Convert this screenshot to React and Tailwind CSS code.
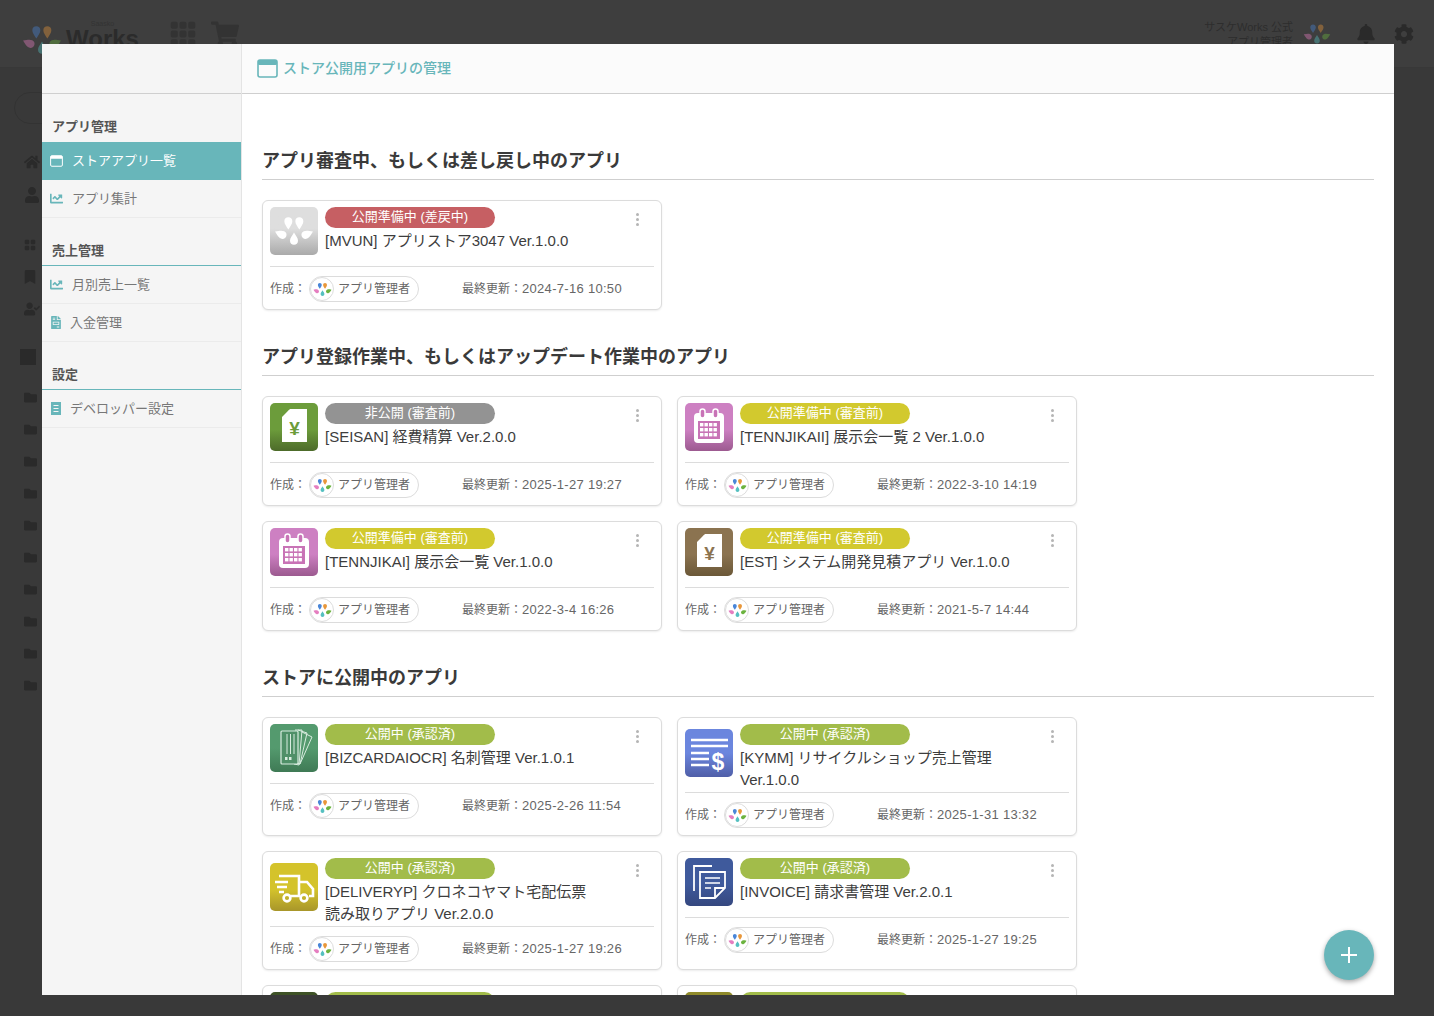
import React from "react";
import { FaHome, FaUserCheck, FaBookmark, FaFolder, FaBell, FaCog, FaChartLine, FaFileInvoice, FaShoppingCart, FaUser } from "react-icons/fa";
import { BsFillGrid3X3GapFill, BsGridFill } from "react-icons/bs";

const font = { fontFamily: '"Liberation Sans", "Noto Sans CJK JP", sans-serif' };

const Drop = ({ x, y, r, s = 1, fill }) => (
  <path
    transform={`translate(${x} ${y}) rotate(${r}) scale(${s})`}
    d="M0 -5.2C1.6 -2.6 3 -1 3 1C3 2.8 1.7 4 0 4C-1.7 4 -3 2.8 -3 1C-3 -1 -1.6 -2.6 0 -5.2Z"
    fill={fill}
  />
);

const Logo = ({ className, colors = ["#4a86d8", "#e8973a", "#e57ec0", "#6cb33f", "#55c0c0"] }) => (
  <svg viewBox="0 0 24 24" className={className}>
    <Drop x={8.6} y={7} r={180} s={0.8} fill={colors[0]} />
    <Drop x={15.2} y={7} r={180} s={0.8} fill={colors[1]} />
    <Drop x={4.4} y={14} r={-65} s={0.8} fill={colors[2]} />
    <Drop x={19.6} y={14} r={65} s={0.8} fill={colors[3]} />
    <Drop x={12} y={17} r={0} s={0.8} fill={colors[4]} />
  </svg>
);

const WindowIcon = ({ className }) => (
  <svg viewBox="0 0 21 19" className={className}>
    <rect x="1" y="1" width="19" height="17" rx="2" fill="none" stroke="currentColor" strokeWidth="1.6" />
    <rect x="1" y="1" width="19" height="5" rx="1.5" fill="currentColor" />
  </svg>
);

const ReceiptIcon = ({ className }) => (
  <svg viewBox="0 0 10 13" className={className}>
    <path d="M0 0h10v13H0z" fill="currentColor" />
    <path d="M2.5 3.5h5M2.5 6.5h5M2.5 9.5h5" stroke="#f5f5f5" strokeWidth="1" />
  </svg>
);

const YenIcon = ({ color }) => (
  <svg viewBox="0 0 48 48" className="w-12 h-12">
    <path d="M20 6h17v33H12V14z" fill="#fff" />
    <path d="M19 7v7h-6z" fill="#fff" opacity="0.75" />
    <text x="24.5" y="32" textAnchor="middle" fontSize="19" fontWeight="700" fill={color} fontFamily="Liberation Sans">¥</text>
  </svg>
);

const CalendarIcon = () => (
  <svg viewBox="0 0 48 48" className="w-12 h-12">
    <rect x="9" y="10" width="30" height="30" rx="4" fill="#fff" />
    <rect x="13" y="18" width="22" height="18" fill="#c873b6" />
    <rect x="15" y="6" width="5" height="9" rx="2.5" fill="#c873b6" stroke="#fff" strokeWidth="1.5" />
    <rect x="28" y="6" width="5" height="9" rx="2.5" fill="#c873b6" stroke="#fff" strokeWidth="1.5" />
    {[20, 25, 30].map((y) =>
      [15, 19.5, 24, 28.5].map((x) => <rect key={`${x}-${y}`} x={x} y={y} width="3.4" height="3.4" fill="#fff" />)
    )}
  </svg>
);

const CardsIcon = () => (
  <svg viewBox="0 0 48 48" className="w-12 h-12" fill="none" stroke="#d8ecdf" strokeWidth="1">
    <path d="M32 8l10 5-12 27-4-2" />
    <path d="M28 6l9 3-7 31-5-1" />
    <path d="M25 6h7l-3 35-5-1" />
    <rect x="11" y="7" width="17" height="33" rx="1" fill="#4f9068" strokeWidth="1.2" />
    <path d="M17 10v20M20.5 10v20M24 10v20" />
    <rect x="15" y="33" width="2.5" height="3" fill="#d8ecdf" stroke="none" />
    <rect x="19" y="33" width="2.5" height="3" fill="#d8ecdf" stroke="none" />
  </svg>
);

const ListIcon = () => (
  <svg viewBox="0 0 48 48" className="w-12 h-12">
    <path d="M6 11h37M6 17h37M6 24h18M6 30h18M6 36h18" stroke="#fff" strokeWidth="2.4" />
    <text x="33" y="41" textAnchor="middle" fontSize="23" fontWeight="700" fill="#fff" fontFamily="Liberation Sans">$</text>
  </svg>
);

const TruckIcon = () => (
  <svg viewBox="0 0 48 48" className="w-12 h-12" fill="none" stroke="#fff" strokeWidth="2.6">
    <path d="M9 13h20v20H19M30 19h7l6 7v7h-4M30 33h-1" />
    <path d="M5 19h13M7 24h10M9 29h5" />
    <circle cx="17" cy="35" r="3.4" />
    <circle cx="34" cy="35" r="3.4" />
  </svg>
);

const InvoiceIcon = () => (
  <svg viewBox="0 0 48 48" className="w-12 h-12" fill="none" stroke="#fff" strokeWidth="1.8">
    <path d="M27 8H9v25" />
    <path d="M15 14h25v16l-10 10H15z" />
    <path d="M30 40V30h10" />
    <path d="M20 20h15M20 25h15M20 30h6" strokeWidth="1.4" />
  </svg>
);

const MonoDrops = () => (
  <div className="w-12 h-12 flex items-center justify-center">
    <Logo className="w-10 h-10" colors={["#fff", "#fff", "#fff", "#fff", "#fff"]} />
  </div>
);

const REVIEW = { label: "公開準備中 (審査前)", color: "bg-[#d2c92e]" };
const LIVE = { label: "公開中 (承認済)", color: "bg-[#a2bc4a]" };

const CardItem = ({ app }) => (
  <div className="relative bg-white border border-[#dcdcdc] rounded-md shadow-[0_1px_2px_rgba(0,0,0,0.08)] px-[7px] pt-[6px] pb-[7px]">
    <div className={app.two ? "flex gap-[7px] h-[68px]" : "flex gap-[7px] h-[59px]"}>
      <div className={`w-12 h-12 shrink-0 rounded-[5px] overflow-hidden ${app.bg} ${app.two ? "mt-[5px]" : ""}`}>{app.icon}</div>
      <div className="w-[272px]">
        <div className={`w-[170px] h-[21px] rounded-full text-white text-[13px] leading-[19px] text-center ${app.status.color}`}>{app.status.label}</div>
        <div className="text-[15px] leading-[22px] text-[#3d3d3d] mt-[2px]">{app.name}</div>
      </div>
    </div>
    <div className="border-t border-[#dcdcdc] flex items-center pt-[9px] text-[12px] text-[#666]">
      <span className="w-[39px] shrink-0">作成：</span>
      <div className="flex items-center w-[110px] h-[26px] border border-[#dcdcdc] rounded-full">
        <div className="w-6 h-6 rounded-full border border-[#ddd] bg-white flex items-center justify-center">
          <Logo className="w-[19px] h-[19px]" />
        </div>
        <span className="ml-[4px]">アプリ管理者</span>
      </div>
      <span className="ml-[43px] whitespace-nowrap">最終更新：<span className="text-[13px] tracking-[0.3px]">{app.date}</span></span>
    </div>
    <div className="absolute right-[22px] top-[12px] flex flex-col gap-[2px]">
      <span className="w-[3px] h-[3px] rounded-full bg-[#b5b5b5]" />
      <span className="w-[3px] h-[3px] rounded-full bg-[#b5b5b5]" />
      <span className="w-[3px] h-[3px] rounded-full bg-[#b5b5b5]" />
    </div>
  </div>
);

const sections = [
  {
    title: "アプリ審査中、もしくは差し戻し中のアプリ",
    apps: [
      { name: "[MVUN] アプリストア3047 Ver.1.0.0", date: "2024-7-16 10:50", status: { label: "公開準備中 (差戻中)", color: "bg-[#c65f63]" }, bg: "bg-linear-to-b from-[#dedede] from-45% to-[#aaaaaa]", icon: <MonoDrops /> },
    ],
  },
  {
    title: "アプリ登録作業中、もしくはアップデート作業中のアプリ",
    apps: [
      { name: "[SEISAN] 経費精算 Ver.2.0.0", date: "2025-1-27 19:27", status: { label: "非公開 (審査前)", color: "bg-[#939393]" }, bg: "bg-linear-to-b from-[#6c9c3b] from-55% to-[#4d6b2a]", icon: <YenIcon color="#6c9c3b" /> },
      { name: "[TENNJIKAII] 展示会一覧 2 Ver.1.0.0", date: "2022-3-10 14:19", status: REVIEW, bg: "bg-linear-to-b from-[#cd80c2] from-55% to-[#9c5a90]", icon: <CalendarIcon /> },
      { name: "[TENNJIKAI] 展示会一覧 Ver.1.0.0", date: "2022-3-4 16:26", status: REVIEW, bg: "bg-linear-to-b from-[#cd80c2] from-55% to-[#9c5a90]", icon: <CalendarIcon /> },
      { name: "[EST] システム開発見積アプリ Ver.1.0.0", date: "2021-5-7 14:44", status: REVIEW, bg: "bg-linear-to-b from-[#8b7350] from-55% to-[#6b5838]", icon: <YenIcon color="#8b7350" /> },
    ],
  },
  {
    title: "ストアに公開中のアプリ",
    apps: [
      { name: "[BIZCARDAIOCR] 名刺管理 Ver.1.0.1", date: "2025-2-26 11:54", status: LIVE, bg: "bg-linear-to-b from-[#549a6e] from-50% to-[#3f7a55]", icon: <CardsIcon /> },
      { name: "[KYMM] リサイクルショップ売上管理 Ver.1.0.0", date: "2025-1-31 13:32", status: LIVE, two: true, bg: "bg-linear-to-b from-[#6b86de] from-50% to-[#505fa8]", icon: <ListIcon /> },
      { name: "[DELIVERYP] クロネコヤマト宅配伝票読み取りアプリ Ver.2.0.0", date: "2025-1-27 19:26", status: LIVE, two: true, bg: "bg-linear-to-b from-[#d4c32b] from-55% to-[#a8962a]", icon: <TruckIcon /> },
      { name: "[INVOICE] 請求書管理 Ver.2.0.1", date: "2025-1-27 19:25", status: LIVE, bg: "bg-linear-to-b from-[#3f5a9c] from-55% to-[#35477f]", icon: <InvoiceIcon /> },
      { name: "", date: "", status: LIVE, bg: "bg-[#3e5226]", icon: null },
      { name: "", date: "", status: LIVE, bg: "bg-[#8f8a2a]", icon: null },
    ],
  },
];

const menu = [
  {
    title: "アプリ管理",
    items: [
      { label: "ストアアプリ一覧", icon: <WindowIcon className="w-[13px] h-3" />, active: true },
      { label: "アプリ集計", icon: <FaChartLine className="w-[13px] h-[13px]" /> },
    ],
  },
  {
    title: "売上管理",
    line: true,
    items: [
      { label: "月別売上一覧", icon: <FaChartLine className="w-[13px] h-[13px]" /> },
      { label: "入金管理", icon: <FaFileInvoice className="w-[10px] h-[13px] ml-[1px]" /> },
    ],
  },
  {
    title: "設定",
    line: true,
    items: [{ label: "デベロッパー設定", icon: <ReceiptIcon className="w-[10px] h-[13px] ml-[1px]" /> }],
  },
];

const Sidebar = () => (
  <aside className="w-[200px] shrink-0 bg-[#f5f5f5] border-r border-[#e4e4e4]">
    <div className="h-[50px] border-b border-[#cfcfcf]" />
    {menu.map((group, i) => (
      <div key={group.title} className={i === 0 ? "pt-[23px]" : "pt-[23px]"}>
        <div className={`h-[25px] pl-[10px] text-[13px] leading-[20px] font-bold text-[#555] ${group.line ? "border-b border-[#68b6ba]" : ""}`}>{group.title}</div>
        {group.items.map((item) => (
          <div
            key={item.label}
            className={
              item.active
                ? "h-[38px] flex items-center pl-[8px] gap-[9px] text-[13px] bg-[#68b6ba] text-white"
                : "h-[38px] flex items-center pl-[8px] gap-[9px] text-[13px] text-[#777] border-b border-[#ebebeb]"
            }
          >
            <span className={item.active ? "text-white" : "text-[#68b6ba]"}>{item.icon}</span>
            {item.label}
          </div>
        ))}
      </div>
    ))}
  </aside>
);

const Modal = () => (
  <div className="absolute left-[42px] top-[44px] w-[1352px] h-[951px] flex bg-white overflow-hidden">
    <Sidebar />
    <div className="flex-1 flex flex-col min-w-0">
      <div className="h-[50px] shrink-0 bg-[#fbfbfb] border-b border-[#cfcfcf] flex items-center pl-[15px] gap-[5px] text-[14px] font-medium text-[#68b6ba]">
        <WindowIcon className="w-[21px] h-[19px]" />
        ストア公開用アプリの管理
      </div>
      <div className="flex-1 overflow-hidden px-5 pt-[54px]">
        {sections.map((section) => (
          <section key={section.title} className="mb-[34px]">
            <h2 className="text-[18px] leading-[26px] font-bold text-[#3a3a3a] pb-[5px] border-b border-[#cfcfcf] mb-5">{section.title}</h2>
            <div className="grid grid-cols-[400px_400px] gap-[15px]">
              {section.apps.map((app, i) => (
                <CardItem key={i} app={app} />
              ))}
            </div>
          </section>
        ))}
      </div>
    </div>
    <button className="absolute right-5 bottom-[15px] w-[50px] h-[50px] rounded-full bg-[#68b6ba] shadow-[0_2px_5px_rgba(0,0,0,0.35)] flex items-center justify-center">
      <svg viewBox="0 0 16 16" className="w-4 h-4" stroke="#fff" strokeWidth="2"><path d="M8 0v16M0 8h16" /></svg>
    </button>
  </div>
);

const Backdrop = () => (
  <div className="h-full flex flex-col text-[#2a2a2a]">
    <header className="h-[68px] shrink-0 bg-[#3e3e3e] border-b border-[#383838] flex items-start pl-[22px] pr-[20px] pt-[20px]">
      <Logo className="w-10 h-10 opacity-40" />
      <div className="ml-[4px] leading-none">
        <div className="text-[7px] text-[#333] text-center">Saasko</div>
        <div className="text-[24px] font-bold text-[#2b2b2b]">Works</div>
      </div>
      <BsFillGrid3X3GapFill className="ml-[30px] w-7 h-7 text-[#333]" />
      <FaShoppingCart className="ml-[14px] w-7 h-7 text-[#333]" />
      <div className="ml-auto text-right text-[11px] leading-[15px] text-[#2d2d2d]">
        サスケWorks 公式
        <br />
        アプリ管理者
      </div>
      <Logo className="ml-[10px] w-7 h-7 opacity-40" />
      <FaBell className="ml-[25px] mt-[4px] w-5 h-5 text-[#2a2a2a]" />
      <FaCog className="ml-[18px] mt-[4px] w-5 h-5 text-[#2a2a2a]" />
    </header>
    <div className="flex-1 bg-[#393939] pl-[14px]">
      <div className="w-[60px] h-[32px] mt-[24px] rounded-full border border-[#333]" />
      <div className="flex flex-col pl-[10px] mt-[30px] gap-[17px]">
        <FaHome className="w-4 h-4" />
        <FaUser className="w-4 h-4" />
        <BsGridFill className="w-3 h-3 mt-[19px]" />
        <FaBookmark className="w-3 h-[14px] mt-[2px]" />
        <FaUserCheck className="w-4 h-4" />
      </div>
      <div className="w-4 h-4 ml-[6px] mt-[32px] bg-[#2a2a2a]" />
      <div className="flex flex-col pl-[10px] mt-[26px] gap-[19px]">
        {Array.from({ length: 10 }).map((_, i) => (
          <FaFolder key={i} className="w-[13px] h-[13px]" />
        ))}
      </div>
    </div>
  </div>
);

export default function App() {
  return (
    <div className="relative w-[1434px] h-[1016px] overflow-hidden" style={font}>
      <Backdrop />
      <Modal />
    </div>
  );
}
